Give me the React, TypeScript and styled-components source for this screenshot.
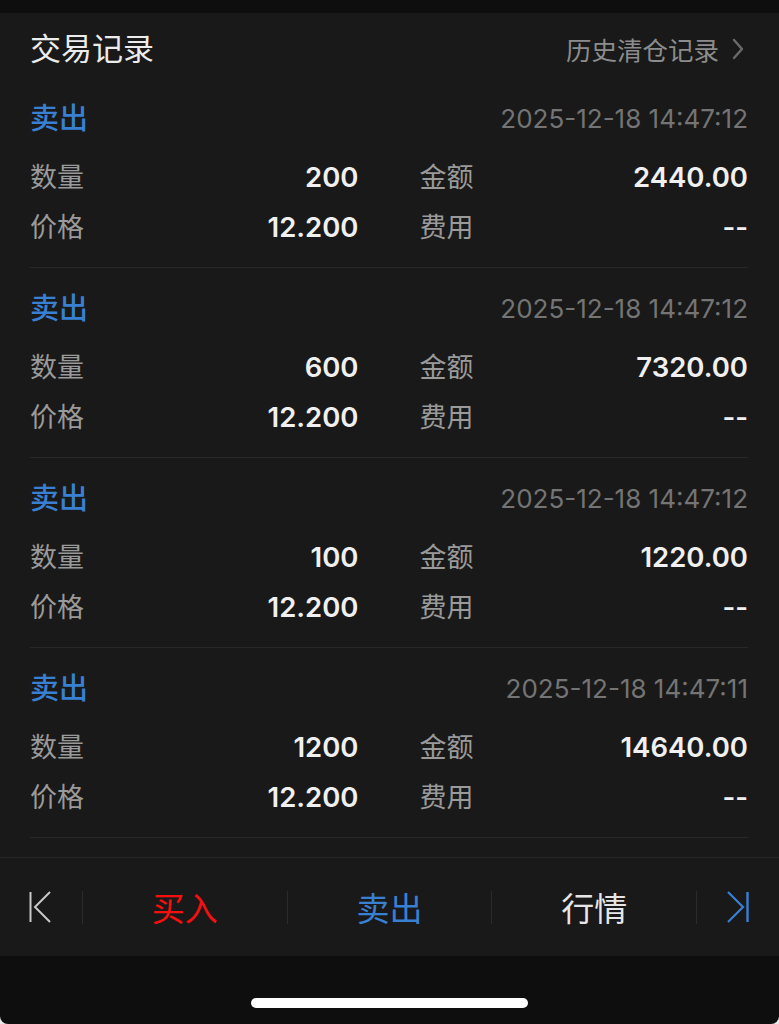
import React from "react";
import styled, { createGlobalStyle } from "styled-components";

const GlobalStyle = createGlobalStyle`
  html, body { margin: 0; padding: 0; background: #e8e8e8; }
  body { font-family: "Inter", "Noto Sans CJK SC", sans-serif; -webkit-font-smoothing: antialiased; }
  * { box-sizing: border-box; }
`;

const Screen = styled.div`
  width: 779px;
  height: 1024px;
  background: #0e0e0e;
  display: flex;
  flex-direction: column;
  border-bottom-left-radius: 8px;
  border-bottom-right-radius: 8px;
  overflow: hidden;
`;

const StatusStrip = styled.div`
  height: 13px;
  flex: none;
  background: #0e0e0e;
`;

const Panel = styled.div`
  background: #191919;
  display: flex;
  flex-direction: column;
  flex: none;
`;

const Header = styled.div`
  height: 65px;
  padding: 2px 35px 0 30px;
  display: flex;
  align-items: center;
  justify-content: space-between;
`;

const Title = styled.div`
  font-family: "Noto Sans CJK SC", sans-serif;
  font-size: 31px;
  color: #ececec;
`;

const HistoryLink = styled.div`
  display: flex;
  align-items: center;
  gap: 13px;
  padding-top: 4px;
  font-family: "Noto Sans CJK SC", sans-serif;
  font-size: 25.5px;
  color: #8c8c8c;
`;

const List = styled.div`
  padding: 0 31px 0 30px;
`;

const Record = styled.div`
  padding: 13px 0 17px 0;
  border-bottom: 1px solid #282828;
`;

const RecordTop = styled.div`
  height: 50px;
  display: flex;
  align-items: center;
  justify-content: space-between;
  margin-bottom: 9px;
`;

const Side = styled.div<{ $tone: string }>`
  font-family: "Noto Sans CJK SC", sans-serif;
  font-size: 29px;
  font-weight: 500;
  color: ${(p) => p.$tone};
`;

const Time = styled.div`
  font-family: "Inter", sans-serif;
  font-size: 26px;
  padding-top: 4px;
  color: #747474;
`;

const Grid = styled.div`
  display: grid;
  grid-template-columns: 1fr 1fr;
  column-gap: 61px;
`;

const Cell = styled.div`
  height: 50px;
  display: flex;
  align-items: center;
  justify-content: space-between;
`;

const Label = styled.span`
  font-family: "Noto Sans CJK SC", sans-serif;
  font-size: 27px;
  color: #9a9a9a;
`;

const Value = styled.span`
  font-family: "Inter", sans-serif;
  font-size: 27.5px;
  font-weight: 600;
  padding-top: 4px;
  color: #f0f0f0;
`;

const Spacer = styled.div`
  height: 19px;
`;

const Toolbar = styled.div`
  height: 99px;
  border-top: 1px solid #262626;
  display: flex;
  align-items: center;
`;

const IconCell = styled.div<{ $shift: number }>`
  width: 82px;
  flex: none;
  display: flex;
  justify-content: center;
  padding-left: ${(p) => (p.$shift < 0 ? 0 : p.$shift)}px;
  padding-right: ${(p) => (p.$shift < 0 ? -p.$shift : 0)}px;
`;

const Divider = styled.div`
  width: 1px;
  height: 33px;
  flex: none;
  background: #2b2b2b;
`;

const Action = styled.div<{ $tone: string }>`
  flex: 1;
  text-align: center;
  font-family: "Noto Sans CJK SC", sans-serif;
  font-size: 33px;
  color: ${(p) => p.$tone};
`;

const HomeArea = styled.div`
  flex: 1;
  display: flex;
  justify-content: center;
  padding-top: 42px;
`;

const HomeIndicator = styled.div`
  width: 277px;
  height: 10px;
  border-radius: 5px;
  background: #ffffff;
`;

type Rec = { qty: string; amount: string; price: string; fee: string; time: string };

const records: Rec[] = [
  { qty: "200", amount: "2440.00", price: "12.200", fee: "--", time: "2025-12-18 14:47:12" },
  { qty: "600", amount: "7320.00", price: "12.200", fee: "--", time: "2025-12-18 14:47:12" },
  { qty: "100", amount: "1220.00", price: "12.200", fee: "--", time: "2025-12-18 14:47:12" },
  { qty: "1200", amount: "14640.00", price: "12.200", fee: "--", time: "2025-12-18 14:47:11" },
];

const Chevron = () => (
  <svg width="12" height="22" viewBox="0 0 12 22" fill="none">
    <polyline points="2,2 10,11 2,20" stroke="#6a6a6a" strokeWidth="2.4" strokeLinecap="round" strokeLinejoin="round" />
  </svg>
);

const FirstIcon = () => (
  <svg width="24" height="34" viewBox="0 0 24 34" fill="none">
    <line x1="2.5" y1="2" x2="2.5" y2="32" stroke="#c8c8c8" strokeWidth="2" />
    <polyline points="22,2 7,17 22,32" stroke="#c8c8c8" strokeWidth="2" />
  </svg>
);

const LastIcon = () => (
  <svg width="24" height="34" viewBox="0 0 24 34" fill="none">
    <polyline points="2,2 17,17 2,32" stroke="#3a80d2" strokeWidth="2.2" />
    <line x1="21.5" y1="2" x2="21.5" y2="32" stroke="#3a80d2" strokeWidth="2.4" />
  </svg>
);

export default function App() {
  return (
    <>
      <GlobalStyle />
      <Screen>
        <StatusStrip />
        <Panel>
          <Header>
            <Title>交易记录</Title>
            <HistoryLink>
              历史清仓记录
              <Chevron />
            </HistoryLink>
          </Header>
          <List>
            {records.map((r, i) => (
              <Record key={i}>
                <RecordTop>
                  <Side $tone="#3a80d2">卖出</Side>
                  <Time>{r.time}</Time>
                </RecordTop>
                <Grid>
                  <Cell>
                    <Label>数量</Label>
                    <Value>{r.qty}</Value>
                  </Cell>
                  <Cell>
                    <Label>金额</Label>
                    <Value>{r.amount}</Value>
                  </Cell>
                  <Cell>
                    <Label>价格</Label>
                    <Value>{r.price}</Value>
                  </Cell>
                  <Cell>
                    <Label>费用</Label>
                    <Value>{r.fee}</Value>
                  </Cell>
                </Grid>
              </Record>
            ))}
          </List>
          <Spacer />
          <Toolbar>
            <IconCell $shift={-2}>
              <FirstIcon />
            </IconCell>
            <Divider />
            <Action $tone="#f51010">买入</Action>
            <Divider />
            <Action $tone="#3a80d2">卖出</Action>
            <Divider />
            <Action $tone="#e6e6e6">行情</Action>
            <Divider />
            <IconCell $shift={0}>
              <LastIcon />
            </IconCell>
          </Toolbar>
        </Panel>
        <HomeArea>
          <HomeIndicator />
        </HomeArea>
      </Screen>
    </>
  );
}
